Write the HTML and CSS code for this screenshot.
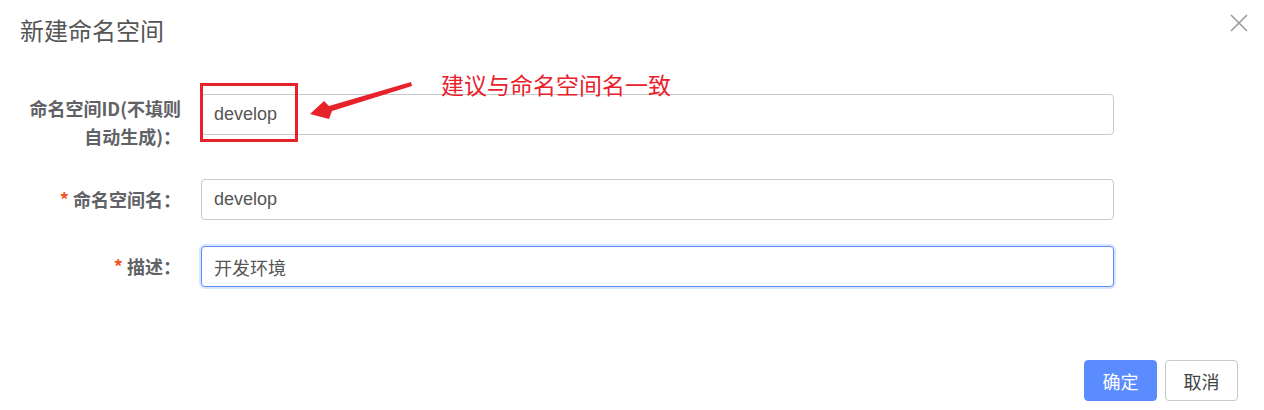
FILE: index.html
```html
<!DOCTYPE html>
<html lang="zh-CN">
<head>
<meta charset="utf-8">
<title>新建命名空间</title>
<link rel="stylesheet" href="styles.css">
</head>
<body>
<div class="dialog">
  <div class="dialog-header">
    <span class="dialog-title">新建命名空间</span>
    <button class="close-btn" aria-label="关闭">
      <svg width="18" height="18" viewBox="0 0 18 18"><path d="M1 1L17 17M17 1L1 17" stroke="#9a9a9a" stroke-width="1.6" fill="none"/></svg>
    </button>
  </div>
  <form class="dialog-body">
    <div class="form-item item-first">
      <label class="form-label label-two">命名空间ID(不填则<br>自动生成)：</label>
      <div class="form-control"><input class="text-input" type="text" value="develop"></div>
    </div>
    <div class="form-item item-second">
      <label class="form-label"><span class="req">*</span>命名空间名：</label>
      <div class="form-control"><input class="text-input" type="text" value="develop"></div>
    </div>
    <div class="form-item item-last">
      <label class="form-label"><span class="req">*</span>描述：</label>
      <div class="form-control"><input class="text-input is-focus" type="text" value="开发环境"></div>
    </div>
  </form>
  <div class="dialog-footer">
    <button class="btn btn-primary" type="button">确定</button>
    <button class="btn btn-default" type="button">取消</button>
  </div>

  <div class="note-box"></div>
  <svg class="note-arrow" width="1264" height="160" viewBox="0 0 1264 160">
    <polygon points="310,114 324,101 329,106 411,82 412,86 332,111 329,119" fill="#e8222b"/>
  </svg>
  <div class="note-text">建议与命名空间名一致</div>
</div>
</body>
</html>
```
FILE: styles.css
```css
* { box-sizing: border-box; }
html, body { margin: 0; padding: 0; background: #fff; }
body {
  font-family: "Liberation Sans", "Noto Sans CJK SC", sans-serif;
  color: #555;
}
.dialog {
  position: relative;
  width: 1264px;
  height: 410px;
}
.dialog-header {
  display: flex;
  justify-content: space-between;
  align-items: flex-start;
  height: 60px;
  padding: 13px 16px 0 20px;
}
.dialog-title {
  font-family: "Noto Sans CJK SC", sans-serif;
  font-size: 24px;
  line-height: 34px;
  color: #555;
}
.close-btn {
  border: 0;
  background: none;
  padding: 0;
  margin-top: 1px;
  width: 18px;
  height: 18px;
  cursor: pointer;
}
.dialog-body {
  margin: 0;
  padding: 34px 150px 0 0;
}
.form-item {
  display: flex;
  align-items: flex-start;
  margin-bottom: 26px;
}
.item-first { margin-bottom: 29px; }
.item-last { margin-bottom: 0; }
.form-label {
  width: 201px;
  flex: none;
  padding-right: 20px;
  text-align: right;
  font-family: "Noto Sans CJK SC", sans-serif;
  font-weight: bold;
  font-size: 18px;
  line-height: 41px;
  color: #606266;
}
.label-two {
  line-height: 28px;
}
.req {
  color: #f4511e;
  margin-right: 4px;
}
.form-control { flex: 1; }
.text-input {
  display: block;
  width: 100%;
  height: 41px;
  padding: 0 12px;
  border: 1px solid #c8c9cd;
  border-radius: 4px;
  font-family: "Liberation Sans", "Noto Sans CJK SC", sans-serif;
  font-size: 18px;
  color: #555;
  background: #fff;
  outline: none;
}
.text-input.is-focus {
  border-color: #5b8cff;
  box-shadow: 0 0 0 2px rgba(91, 140, 255, 0.22);
}
.dialog-footer {
  display: flex;
  justify-content: flex-end;
  gap: 8px;
  padding: 73px 26px 0 0;
}
.btn {
  width: 73px;
  height: 41px;
  border-radius: 4px;
  font-family: "Noto Sans CJK SC", sans-serif;
  font-size: 18px;
  padding: 0;
  cursor: pointer;
}
.btn-primary {
  background: #5b8cff;
  border: 1px solid #5b8cff;
  color: #fff;
}
.btn-default {
  background: #fff;
  border: 1px solid #c8c9cd;
  color: #444;
}
.note-box {
  position: absolute;
  left: 200px;
  top: 83px;
  width: 98px;
  height: 59px;
  border: 3px solid #e8222b;
}
.note-arrow {
  position: absolute;
  left: 0;
  top: 0;
}
.note-text {
  position: absolute;
  left: 441px;
  top: 67px;
  font-family: "Noto Sans CJK SC", sans-serif;
  font-size: 23px;
  line-height: 34px;
  color: #e8222b;
}
```
